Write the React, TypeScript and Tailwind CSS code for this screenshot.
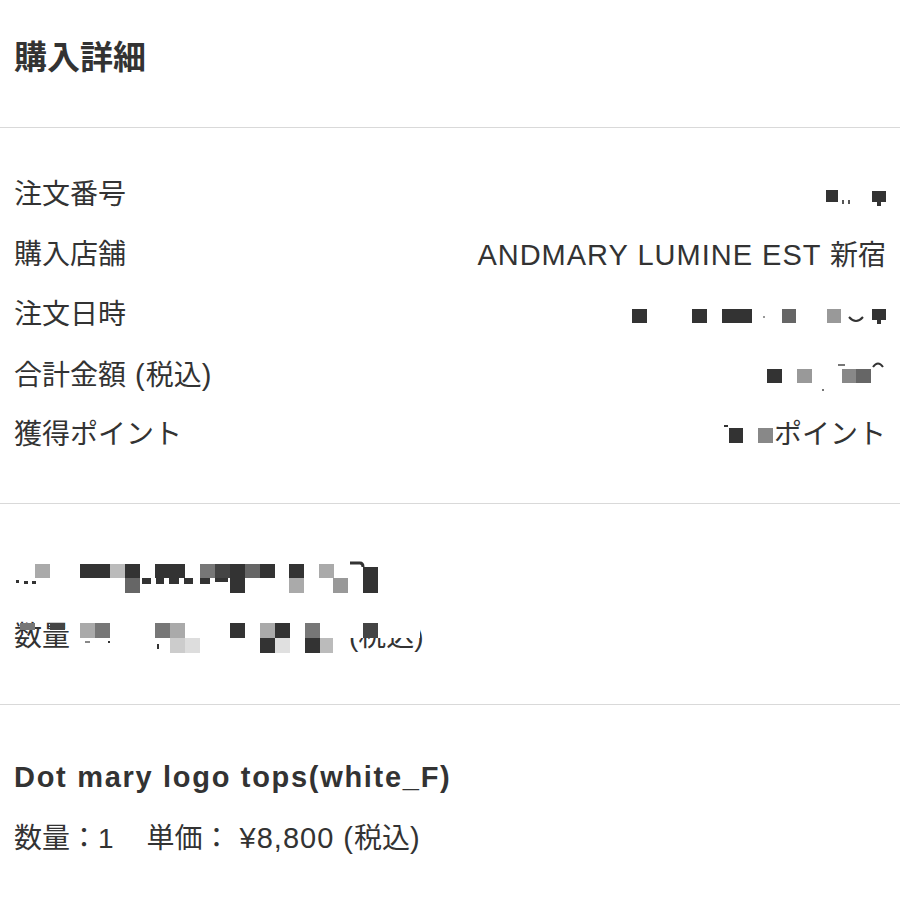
import React from "react";

type Cell = [number, number, number, number, string];

const font = { fontFamily: '"Liberation Sans", "Noto Sans CJK JP", sans-serif' };

// pixelated cover over hidden order data
const Mosaic: React.FC<{ width: number; height?: number; cells: Cell[]; children?: React.ReactNode; className?: string }> = ({
    width,
    height = 40,
    cells,
    children,
    className,
}) => (
    <svg width={width} height={height} viewBox={`0 0 ${width} ${height}`} className={className}>
        {cells.map(([x, y, w, h, fill], i) => (
            <rect key={i} x={x} y={y} width={w} height={h} fill={fill} />
        ))}
        {children}
    </svg>
);

const InfoRow: React.FC<{ label: React.ReactNode; children: React.ReactNode }> = ({ label, children }) => (
    <div className="flex h-[60px] items-center justify-between">
        <span>{label}</span>
        <div className="flex items-center">{children}</div>
    </div>
);

export default function App() {
    return (
        <div className="min-h-[900px] bg-white text-[#333] text-[28px] leading-[40px]" style={font}>
            {/* header */}
            <div className="h-[128px] border-b border-[#d9d9d9] px-[14px] pt-[38px]">
                <h1 className="text-[33px] font-bold leading-[40px]">購入詳細</h1>
            </div>

            {/* order info */}
            <div className="border-b border-[#d9d9d9] pl-[14px] pr-[14px] pt-[37px] pb-[38px]">
                <InfoRow label="注文番号">
                    <Mosaic
                        width={62}
                        cells={[
                            [2, 15, 12, 12, "#333"],
                            [18, 25, 2, 4, "#555"],
                            [24, 25, 2, 4, "#555"],
                            [48, 16, 14, 11, "#333"],
                            [53, 27, 4, 4, "#333"],
                        ]}
                    />
                </InfoRow>
                <InfoRow label="購入店舗">
                    <span>
                        <span className="text-[29px] tracking-[1px]">ANDMARY LUMINE EST </span>新宿
                    </span>
                </InfoRow>
                <InfoRow label="注文日時">
                    <Mosaic
                        width={256}
                        cells={[
                            [2, 14, 15, 14, "#333"],
                            [62, 14, 15, 14, "#333"],
                            [92, 14, 30, 14, "#333"],
                            [133, 21, 2, 2, "#999"],
                            [152, 14, 14, 14, "#666"],
                            [197, 14, 14, 14, "#999"],
                            [242, 14, 14, 11, "#333"],
                            [247, 25, 4, 4, "#333"],
                        ]}
                    >
                        <path d="M219 22 Q226 30 233 22" stroke="#333" strokeWidth="2" fill="none" />
                    </Mosaic>
                </InfoRow>
                <InfoRow
                    label={
                        <>
                            合計金額<span className="text-[29px] tracking-[1px]"> (</span>税込
                            <span className="text-[29px]">)</span>
                        </>
                    }
                >
                    <Mosaic
                        width={121}
                        cells={[
                            [2, 14, 15, 14, "#333"],
                            [32, 14, 15, 14, "#999"],
                            [57, 34, 2, 2, "#777"],
                            [73, 9, 7, 2, "#777"],
                            [77, 14, 14, 14, "#888"],
                            [91, 14, 15, 14, "#666"],
                        ]}
                    >
                        <path d="M108 12 Q113 5 118 12" stroke="#333" strokeWidth="2" fill="none" />
                    </Mosaic>
                </InfoRow>
                <InfoRow label="獲得ポイント">
                    <Mosaic
                        width={50}
                        cells={[
                            [0, 10, 4, 2, "#333"],
                            [5, 13, 14, 15, "#333"],
                            [34, 13, 15, 15, "#888"],
                        ]}
                    />
                    <span>ポイント</span>
                </InfoRow>
            </div>

            {/* first item */}
            <div className="border-b border-[#d9d9d9] px-[14px] pt-[52px] pb-[47px]">
                <Mosaic
                    width={366}
                    className="block"
                    cells={[
                        [2, 24, 3, 3, "#333"],
                        [10, 25, 4, 3, "#333"],
                        [18, 25, 4, 3, "#333"],
                        [21, 8, 15, 14, "#aaa"],
                        [66, 8, 30, 14, "#333"],
                        [96, 8, 15, 14, "#bbb"],
                        [111, 8, 15, 14, "#333"],
                        [111, 22, 15, 15, "#666"],
                        [128, 22, 9, 6, "#333"],
                        [141, 8, 30, 14, "#333"],
                        [142, 22, 8, 6, "#333"],
                        [155, 22, 10, 6, "#333"],
                        [170, 22, 9, 6, "#333"],
                        [186, 8, 15, 14, "#777"],
                        [186, 22, 10, 6, "#333"],
                        [201, 8, 15, 14, "#444"],
                        [201, 22, 13, 4, "#333"],
                        [216, 8, 15, 14, "#333"],
                        [216, 22, 15, 15, "#333"],
                        [231, 8, 15, 14, "#666"],
                        [246, 8, 15, 14, "#333"],
                        [275, 8, 15, 14, "#333"],
                        [275, 22, 15, 15, "#aaa"],
                        [305, 8, 15, 14, "#aaa"],
                        [319, 22, 15, 15, "#999"],
                        [349, 11, 15, 26, "#333"],
                    ]}
                >
                    <path d="M336 7 H346 Q349 7 349 11" stroke="#333" strokeWidth="3" fill="none" />
                </Mosaic>
                <div className="relative mt-[21px] flex h-[40px] items-center">
                    <span>数量</span>
                    <span className="w-[279px]" />
                    <span>(税込)</span>
                    <Mosaic
                        width={420}
                        className="absolute left-[-14px] top-0"
                        cells={[
                            [347, 0, 75, 21, "#fff"],
                            [20, 6, 15, 7, "#777"],
                            [50, 6, 15, 7, "#444"],
                            [80, 6, 15, 15, "#aaa"],
                            [95, 6, 15, 15, "#777"],
                            [85, 24, 5, 2, "#888"],
                            [108, 24, 2, 2, "#333"],
                            [155, 6, 15, 15, "#777"],
                            [157, 27, 2, 5, "#333"],
                            [170, 6, 15, 15, "#aaa"],
                            [170, 21, 15, 15, "#ccc"],
                            [185, 21, 15, 15, "#ddd"],
                            [230, 6, 15, 15, "#333"],
                            [260, 6, 15, 15, "#aaa"],
                            [260, 21, 15, 15, "#333"],
                            [275, 6, 15, 15, "#333"],
                            [275, 21, 15, 15, "#e0e0e0"],
                            [305, 6, 15, 15, "#777"],
                            [305, 21, 15, 15, "#333"],
                            [320, 21, 13, 15, "#bbb"],
                            [363, 6, 15, 15, "#444"],
                        ]}
                    />
                </div>
            </div>

            {/* second item */}
            <div className="px-[14px] pt-[52px]">
                <p className="font-bold text-[29px] tracking-[1.7px]">Dot mary logo tops(white_F)</p>
                <p className="mt-[21px]">
                    数量：1
                    <span className="ml-[33px]">単価：</span>
                    <span className="ml-[9px] text-[29px] tracking-[1px]">¥8,800 (</span>税込
                    <span className="text-[29px]">)</span>
                </p>
            </div>
        </div>
    );
}
